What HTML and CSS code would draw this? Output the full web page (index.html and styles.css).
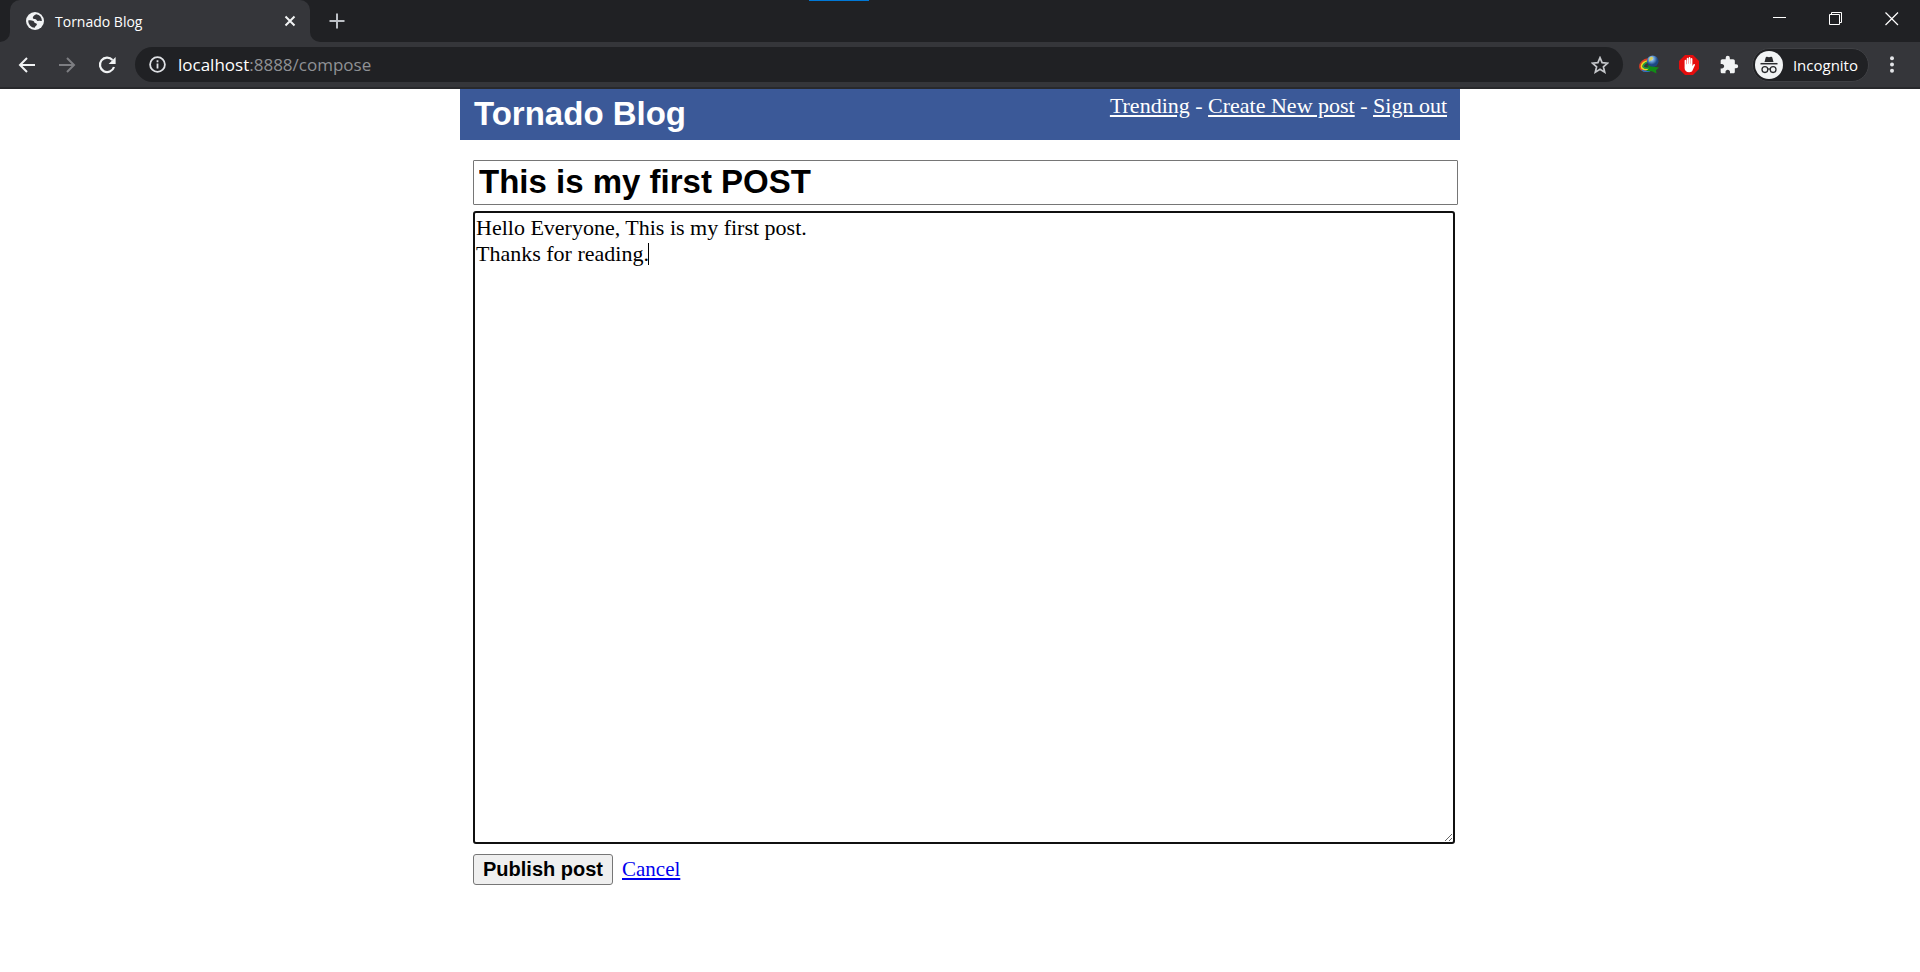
FILE: index.html
```
<!DOCTYPE html>
<html lang="en">
<head>
<meta charset="utf-8">
<title>Tornado Blog</title>
<link rel="stylesheet" href="styles.css">
</head>
<body>
<div class="browser">
  <div class="tabstrip">
    <div class="strip-edge"></div>
    <div class="tab">
      <svg class="favicon" viewBox="0 0 18 18" aria-hidden="true"><circle cx="9" cy="9" r="9" fill="#f1f3f4"/><path d="M10.300 2.200C9 2.600 7 4 6.800 5.500c-.1 1.300 1 1.600 2.200 1.600 1 .1 1.300.9 2.200 1.600 1 .6 2.300-.3 3.300.2.800.4 1.200 0 1.400-.4A7 7 0 0 0 10.300 2.200zM2.200 8.500c1.200-.5 3.600-.4 5.200.4 1 .5.800 1.700 1.600 2.100 1 .4 2 .5 1.900 1.600-.1 1.200-1.500 1.300-2.200 3.200A7 7 0 0 1 2.200 8.500z" fill="#35363a"/></svg>
      <span class="tab-title">Tornado Blog</span>
      <button class="icon-btn" aria-label="Close tab"><svg width="12" height="12" viewBox="0 0 12 12"><path d="M1.500 1.500l9 9M10.500 1.500l-9 9" stroke="#f1f3f4" stroke-width="2"/></svg></button>
    </div>
    <div class="new-tab-cell"><button class="icon-btn new-tab" aria-label="New tab"><svg width="16" height="16" viewBox="0 0 16 16"><path d="M8 .5v15M.5 8h15" stroke="#bdc1c6" stroke-width="2"/></svg></button></div>
    <div class="load-line"></div>
    <div class="window-controls">
      <button class="icon-btn" aria-label="Minimize"><svg width="14" height="14" viewBox="0 0 14 14"><path d="M0 5.500h13" stroke="#fff"/></svg></button>
      <button class="icon-btn" aria-label="Restore"><svg width="14" height="14" viewBox="0 0 14 14" fill="none" stroke="#fff"><path d="M.5 2.500h10v10H.5zM2.500 2.500v-2h10v10h-2"/></svg></button>
      <button class="icon-btn" aria-label="Close window"><svg width="14" height="14" viewBox="0 0 14 14"><path d="M.5.500l12.500 12.500M13 .5L.5 13" stroke="#fff" stroke-width="1.200"/></svg></button>
    </div>
  </div>
  <div class="toolbar">
    <div class="nav-buttons">
      <button class="icon-btn" aria-label="Back"><svg width="18" height="18" viewBox="0 0 18 18" fill="none" stroke="#f1f3f4" stroke-width="2"><path d="M17 9H2M9 2L2 9l7 7"/></svg></button>
      <button class="icon-btn" aria-label="Forward"><svg width="18" height="18" viewBox="0 0 18 18" fill="none" stroke="#7d7e82" stroke-width="2"><path d="M1 9h15M9 2l7 7-7 7"/></svg></button>
      <button class="icon-btn" aria-label="Reload"><svg width="18" height="18" viewBox="0 0 18 18"><path d="M14.500 4A7.200 7.200 0 1 0 16 11" fill="none" stroke="#f1f3f4" stroke-width="2.200"/><path d="M17.600 1v7h-7z" fill="#f1f3f4"/></svg></button>
    </div>
    <div class="address">
      <svg width="17" height="17" viewBox="0 0 17 17" aria-hidden="true"><circle cx="8.500" cy="8.500" r="7.400" fill="none" stroke="#dfe1e5" stroke-width="1.800"/><path d="M8.500 7.400v5M8.500 4.300v1.900" stroke="#dfe1e5" stroke-width="1.800"/></svg>
      <span class="url"><span class="host">localhost</span>:8888/compose</span>
      <button class="icon-btn" aria-label="Bookmark this page"><svg width="18" height="18" viewBox="0 0 18 18"><path d="M9 1.700l2.100 5 5.500.5-4.200 3.600 1.300 5.400L9 13.300l-4.700 2.900 1.300-5.400-4.200-3.600 5.500-.5z" fill="none" stroke="#c4c6ca" stroke-width="1.700"/></svg></button>
    </div>
    <div class="extensions">
      <button class="icon-btn" aria-label="Download manager"><svg width="20" height="20" viewBox="0 0 20 20">
        <defs><radialGradient id="globe" cx=".4" cy=".3"><stop offset="0" stop-color="#e9f5d0"/><stop offset=".45" stop-color="#6ea3dc"/><stop offset="1" stop-color="#1c4784"/></radialGradient></defs>
        <path d="M9 4.200C4.500 4.500 1 8 1 11.500c0 3.500 4 5 9 3.500" fill="none" stroke="#dc3b24" stroke-width="1.800"/><path d="M9 5.800C5.500 6 2.500 9 2.500 11.500c0 2.500 3.500 3.500 7.500 2.500" fill="none" stroke="#f4d51f" stroke-width="1.800"/><path d="M9 7.300C6.500 7.500 4.200 9.500 4.200 11.300s2.300 2.200 5.800 1.700" fill="none" stroke="#20a244" stroke-width="1.600"/><path d="M3 15c2 1.800 5 1.600 8 .7" fill="none" stroke="#2878c8" stroke-width="1.500"/>
        <circle cx="13.700" cy="6.200" r="5.800" fill="url(#globe)"/><path d="M10.500 3c2-2.500 4.500-1 3 1s-2.500 1.500-3.500 3z" fill="#d5cf62"/><path d="M8 10l4 1.500 8 1-3 2.700.5 3.300-4.500-2.200-6-.3 3-2.500z" fill="#128c16"/></svg></button>
      <button class="icon-btn" aria-label="Ad blocker"><svg width="20" height="20" viewBox="0 0 20 20"><path d="M6 0h8l6 6v8l-6 6H6l-6-6V6z" fill="#e40d0d"/><path d="M5.600 9.500V5.800c0-1.300 1.700-1.300 1.700 0v3.400h.4V3.700c0-1.300 1.700-1.300 1.700 0v5.100h.3V2.900c0-1.300 1.700-1.300 1.700 0v5.900h.3V4c0-1.300 1.700-1.300 1.700 0v7.200l.9-1.600c.6-1 2-.5 1.600.6l-2.200 4.900C13 17 12 17.300 10.200 17.300c-3 0-4.600-1.600-4.600-4.200z" fill="#fff"/></svg></button>
      <button class="icon-btn" aria-label="Extensions"><svg width="20" height="20" viewBox="0 0 24 24"><path d="M20.500 11H19V7c0-1.100-.9-2-2-2h-4V3.500a2.500 2.500 0 0 0-5 0V5H4c-1.100 0-1.990.9-1.990 2v3.800H3.500c1.490 0 2.700 1.210 2.700 2.700s-1.210 2.700-2.700 2.700H2V20c0 1.100.9 2 2 2h3.800v-1.500c0-1.490 1.210-2.700 2.700-2.700s2.700 1.210 2.700 2.700V22H17c1.100 0 2-.9 2-2v-4h1.500a2.500 2.500 0 0 0 0-5z" fill="#f1f3f4"/></svg></button>
    </div>
    <button class="profile">
      <svg width="28" height="28" viewBox="0 0 28 28" aria-hidden="true"><circle cx="14" cy="14" r="14" fill="#f1f3f4"/><path d="M9.500 11l1.200-4.500c.2-.7.700-1 1.300-.8l2 .5 2-.5c.6-.2 1.100.1 1.300.8l1.200 4.500z" fill="#292a2d"/><path d="M5.500 12.700h17" stroke="#292a2d" stroke-width="1.500"/><g fill="none" stroke="#292a2d" stroke-width="1.300"><circle cx="9.900" cy="18.600" r="2.900"/><circle cx="18.100" cy="18.600" r="2.900"/><path d="M12.800 18.300q1.200-.8 2.400 0"/></g></svg>
      <span>Incognito</span>
    </button>
    <button class="icon-btn menu" aria-label="Menu"><svg width="4" height="17" viewBox="0 0 4 17" fill="#e3e5e8"><circle cx="2" cy="2.200" r="2"/><circle cx="2" cy="8.500" r="2"/><circle cx="2" cy="14.800" r="2"/></svg></button>
  </div>
</div>
<div class="page">
  <header class="header">
    <h1>Tornado Blog</h1>
    <nav><a href="#">Trending</a> - <a href="#">Create New post</a> - <a href="#">Sign out</a></nav>
  </header>
  <form class="compose">
    <input class="title" type="text" aria-label="Title" value="This is my first POST">
    <div class="editor">
      <textarea class="content" aria-label="Post">Hello Everyone, This is my first post.
Thanks for reading.</textarea>
      <span class="caret"></span>
    </div>
    <div class="actions">
      <button class="publish" type="button">Publish post</button>
      <a href="#">Cancel</a>
    </div>
  </form>
</div>
</body>
</html>
```
FILE: styles.css
```
* { box-sizing: border-box; }
body { margin: 0; background: #fff; color: #000; font-family: Georgia, "Liberation Serif", serif; font-size: 22px; }
svg { display: block; flex: none; }
.icon-btn { display: flex; align-items: center; justify-content: center; padding: 0; border: 0; background: none; }

.browser { font-family: "Segoe UI", "Open Sans", sans-serif; color: #fff; background: #202124; }
.tabstrip { display: flex; height: 42px; position: relative; }
.strip-edge { width: 10px; background: #35363a; }
.strip-edge::before { content: ""; display: block; height: 42px; background: #202124; border-bottom-right-radius: 10px; }
.tab { display: flex; align-items: center; width: 300px; padding: 0 14px 0 16px; background: #35363a; border-radius: 10px 10px 0 0; }
.favicon { width: 18px; height: 18px; }
.tab-title { flex: 1; margin-left: 11px; font-size: 14px; }
.new-tab-cell { width: 54px; background: linear-gradient(#202124 50%, #35363a 50%); }
.new-tab { width: 54px; height: 42px; background: #202124; border-bottom-left-radius: 10px; }
.load-line { position: absolute; top: 0; left: 42%; width: 60px; height: 1px; margin-left: 3px; background: #0078d7; }
.window-controls { display: flex; margin-left: auto; height: 38px; }
.window-controls .icon-btn { width: 56px; }

.toolbar { display: flex; align-items: center; height: 47px; padding: 0 26px 0 18px; background: #35363a; border-bottom: 2px solid #28292c; }
.nav-buttons { display: flex; gap: 22px; width: 117px; }
.address { display: flex; align-items: center; flex: 1; height: 35px; padding: 0 14px; border-radius: 18px; background: #202124; }
.url { flex: 1; margin-left: 12px; font-size: 17px; color: #8f9195; }
.host { color: #fff; }
.extensions { display: flex; gap: 20px; margin: 0 13px 0 16px; }
.profile { display: flex; align-items: center; gap: 10px; height: 34px; padding: 0 10px 0 2px; border: 1px solid #3f4044; border-radius: 17px; background: #202124; color: #fff; font: 15px "Segoe UI", "Open Sans", sans-serif; }
.menu { margin-left: 21px; width: 4px; }

.page { width: 100%; max-width: 1000px; margin: 0 auto; }
.header { display: flex; justify-content: space-between; padding: 5px 13px 6px 14px; min-height: 51px; background: #3b5998; color: #fff; }
.header h1 { margin: 0; font: bold 33px/40px Arial, "Liberation Sans", sans-serif; }
.header nav { line-height: 24px; }
.header a { color: #fff; }
.compose { padding: 20px 2px 0 13px; }
.title { display: block; width: 100%; height: 45px; padding: 0 5px 2px; border: 1px solid #767676; border-radius: 1px; color: #000; background: #fff; font: bold 33px Arial, "Liberation Sans", sans-serif; }
.editor { position: relative; margin: 6px 3px 10px 0; }
.content { display: block; width: 100%; height: 633px; padding: 2px 1px; border: 2px solid #101010; border-radius: 3px; outline: 0; color: #000; background: #fff; font: inherit; line-height: 26px; resize: vertical; }
.caret { position: absolute; left: 175px; top: 32px; width: 1px; height: 22px; background: #000; }
.actions { display: flex; align-items: center; gap: 9px; font-size: 21px; }
.publish { height: 31px; padding: 0 9px; border: 1px solid #767676; border-radius: 3px; background: #efefef; color: #000; font: bold 20px Arial, "Liberation Sans", sans-serif; }
.actions a { color: #0000ee; }
```
